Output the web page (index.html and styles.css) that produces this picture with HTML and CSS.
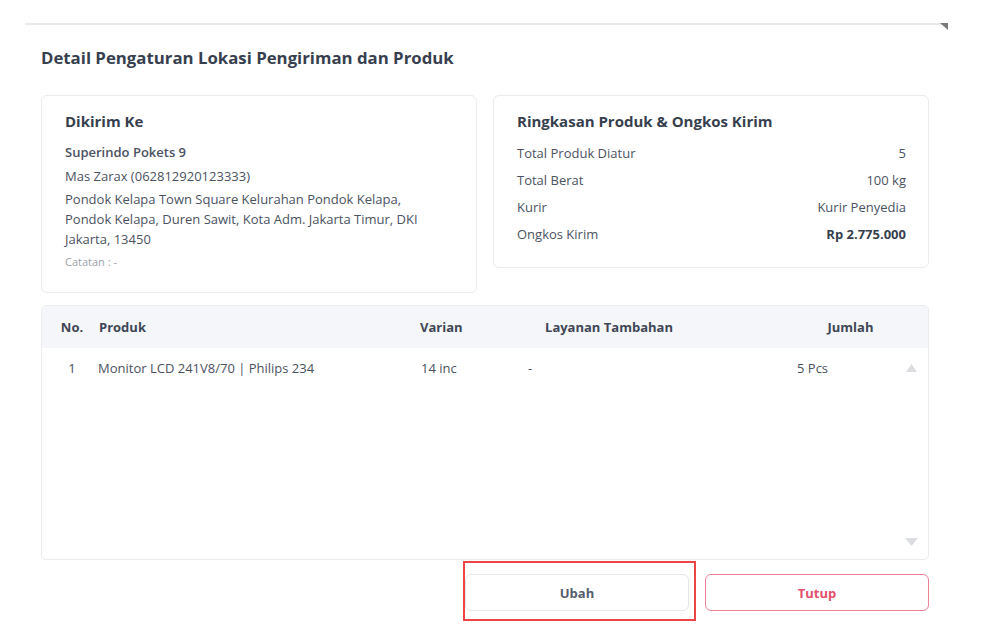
FILE: index.html
```html
<!DOCTYPE html>
<html lang="id">
<head>
<meta charset="utf-8">
<title>Detail Pengaturan Lokasi Pengiriman dan Produk</title>
<link rel="stylesheet" href="styles.css">
</head>
<body>
<div class="sheet">
  <svg class="corner" width="8" height="7" viewBox="0 0 8 7"><polygon points="0,0 8,0 8,7" fill="#7a7a7a"/></svg>
  <h1 class="title">Detail Pengaturan Lokasi Pengiriman dan Produk</h1>

  <div class="cards">
    <section class="card card-left">
      <h2 class="card-title">Dikirim Ke</h2>
      <p class="store">Superindo Pokets 9</p>
      <p class="line">Mas Zarax (062812920123333)</p>
      <p class="line address">Pondok Kelapa Town Square Kelurahan Pondok Kelapa, Pondok Kelapa, Duren Sawit, Kota Adm. Jakarta Timur, DKI Jakarta, 13450</p>
      <p class="note">Catatan : -</p>
    </section>
    <section class="card card-right">
      <h2 class="card-title">Ringkasan Produk &amp; Ongkos Kirim</h2>
      <div class="sum-row"><span>Total Produk Diatur</span><span>5</span></div>
      <div class="sum-row"><span>Total Berat</span><span>100 kg</span></div>
      <div class="sum-row"><span>Kurir</span><span>Kurir Penyedia</span></div>
      <div class="sum-row"><span>Ongkos Kirim</span><span class="strong">Rp 2.775.000</span></div>
    </section>
  </div>

  <div class="table">
    <div class="trow thead">
      <div class="c-no">No.</div>
      <div class="c-prod">Produk</div>
      <div class="c-var">Varian</div>
      <div class="c-lay">Layanan Tambahan</div>
      <div class="c-sp"></div>
      <div class="c-qty">Jumlah</div>
    </div>
    <div class="tbody">
      <div class="trow tdata">
        <div class="c-no">1</div>
        <div class="c-prod">Monitor LCD 241V8/70 | Philips 234</div>
        <div class="c-var">14 inc</div>
        <div class="c-lay">-</div>
        <div class="c-sp"></div>
        <div class="c-qty">5 Pcs</div>
      </div>
      <svg class="arrow arrow-up" width="11" height="8" viewBox="0 0 11 8"><polygon points="5.5,0 11,8 0,8" fill="#dcdde1"/></svg>
      <svg class="arrow arrow-down" width="13" height="8" viewBox="0 0 13 8"><polygon points="0,0 13,0 6.5,8" fill="#dcdde1"/></svg>
    </div>
  </div>

  <div class="actions">
    <div class="btn-wrap">
      <button class="btn btn-edit">Ubah</button>
      <div class="highlight"></div>
    </div>
    <button class="btn btn-close">Tutup</button>
  </div>
</div>
</body>
</html>
```

FILE: styles.css
```css
* { box-sizing: border-box; }

body {
  margin: 0;
  background: #ffffff;
  font-family: "Open Sans", "Noto Sans", sans-serif;
  color: #4b5262;
}

.sheet {
  position: relative;
  margin: 23px 0 0 25px;
  width: 923px;
  border-top: 2px solid #e9e9e9;
  padding: 0 18px 20px 16px;
}

.corner {
  position: absolute;
  top: -2px;
  right: 0;
}

.title {
  margin: 21px 0 0;
  font-size: 16.8px;
  line-height: 24px;
  font-weight: 700;
  color: #373f4f;
}

.cards {
  display: flex;
  gap: 16px;
  margin-top: 25px;
  align-items: flex-start;
}

.card {
  width: 436px;
  border: 1px solid #ececec;
  border-radius: 6px;
  padding: 15px 22px 0 23px;
}

.card-left { height: 198px; }
.card-right { height: 173px; }

.card-title {
  margin: 0;
  font-size: 15px;
  line-height: 20px;
  font-weight: 700;
  color: #373f4f;
}

.store {
  margin: 11px 0 0;
  font-size: 13px;
  line-height: 20px;
  font-weight: 600;
  color: #4b5262;
}

.line {
  margin: 4px 0 0;
  font-size: 13px;
  line-height: 20px;
}

.address {
  margin-top: 3px;
  width: 362px;
}

.note {
  margin: 4px 0 0;
  font-size: 11px;
  line-height: 18px;
  color: #9ca2aa;
}

.sum-row {
  display: flex;
  justify-content: space-between;
  font-size: 13px;
  line-height: 20px;
  margin-top: 7px;
}

.card-right .card-title + .sum-row { margin-top: 12px; }

.strong {
  font-weight: 700;
  color: #373f4f;
}

.table {
  margin-top: 12px;
  width: 888px;
  height: 255px;
  border: 1px solid #ececec;
  border-radius: 5px;
  overflow: hidden;
}

.trow {
  display: grid;
  grid-template-columns: 40px 328px 108px 162px 107px 107px;
  padding-left: 10px;
  align-items: center;
}

.thead {
  height: 42px;
  background: #f5f6f9;
  font-size: 13px;
  font-weight: 700;
  color: #3f4656;
}

.thead .c-lay,
.thead .c-qty { text-align: center; }

.c-no { text-align: center; }
.c-prod { padding-left: 7px; }

.tbody {
  position: relative;
  height: 211px;
}

.tdata {
  padding-top: 10px;
  font-size: 13px;
  line-height: 20px;
}

.tdata .c-prod { padding-left: 6px; }
.tdata .c-var { padding-left: 1px; }

.arrow {
  position: absolute;
  right: 11px;
}

.arrow-up { top: 16px; }
.arrow-down { bottom: 13px; right: 10px; }

.actions {
  display: flex;
  justify-content: flex-end;
  gap: 16px;
  width: 888px;
  margin-top: 14px;
}

.btn-wrap {
  position: relative;
}

.btn {
  width: 224px;
  height: 37px;
  border-radius: 6px;
  background: #ffffff;
  font-family: "Open Sans", "Noto Sans", sans-serif;
  font-size: 13px;
  font-weight: 700;
  cursor: pointer;
  display: block;
}

.btn-edit {
  border: 1px solid #e6e6e8;
  color: #565d6c;
}

.btn-close {
  border: 1.5px solid #ea8294;
  color: #e3506b;
}

.highlight {
  position: absolute;
  left: -2px;
  top: -13px;
  width: 233px;
  height: 60px;
  border: 2px solid #ef4444;
  pointer-events: none;
}
```
